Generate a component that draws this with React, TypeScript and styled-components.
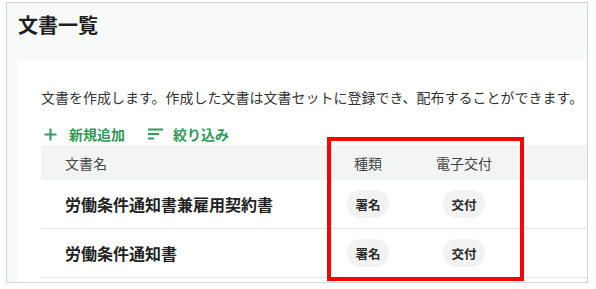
import styled, { createGlobalStyle } from "styled-components";

const GlobalStyle = createGlobalStyle`
  html, body {
    margin: 0;
    padding: 0;
    background: #ffffff;
  }
  body {
    font-family: "Noto Sans CJK JP", "Noto Sans", sans-serif;
    color: #222222;
  }
`;

const Page = styled.div`
  position: relative;
  width: 596px;
  height: 289px;
  padding: 2px 0 0 6px;
  box-sizing: border-box;
`;

const Frame = styled.div`
  width: 582px;
  height: 281px;
  box-sizing: border-box;
  border: 1px solid #d4d4d4;
  background: #f8f9f9;
  overflow: hidden;
  display: flex;
  flex-direction: column;
`;

const PageHeader = styled.div`
  height: 57px;
  padding: 9px 0 0 11px;
  box-sizing: border-box;
  flex-shrink: 0;
`;

const Title = styled.h1`
  margin: 0;
  font-size: 20px;
  line-height: 26px;
  font-weight: 700;
  color: #1f1f1f;
`;

const Card = styled.div`
  flex: 1;
  margin-left: 10px;
  background: #ffffff;
  padding: 27px 0 0 24px;
  display: flex;
  flex-direction: column;
`;

const Description = styled.p`
  margin: 0;
  font-size: 14px;
  line-height: 20px;
  color: #333333;
  white-space: nowrap;
`;

const Toolbar = styled.div`
  display: flex;
  align-items: center;
  gap: 20px;
  margin-top: 17px;
  height: 20px;
`;

const ToolButton = styled.button<{ $gap: number }>`
  display: flex;
  align-items: center;
  gap: ${(p) => p.$gap}px;
  padding: 0 0 0 3px;
  border: none;
  background: none;
  font-family: inherit;
  font-size: 14px;
  font-weight: 700;
  line-height: 20px;
  color: #2e9b57;
  cursor: pointer;
`;

const Table = styled.div`
  margin-top: 1px;
  display: flex;
  flex-direction: column;
`;

const Row = styled.div<{ $head?: boolean }>`
  display: grid;
  grid-template-columns: 289px 76px 116px 1fr;
  align-items: center;
  height: ${(p) => (p.$head ? "35px" : "49px")};
  box-sizing: border-box;
  background: ${(p) => (p.$head ? "#f3f4f4" : "#ffffff")};
  border-bottom: ${(p) => (p.$head ? "none" : "1px solid #e6e6e6")};
`;

const HeadCell = styled.div<{ $center?: boolean }>`
  font-size: 14px;
  color: #444444;
  padding-left: ${(p) => (p.$center ? "0" : "24px")};
  text-align: ${(p) => (p.$center ? "center" : "left")};
`;

const NameCell = styled.div`
  padding-left: 24px;
  font-size: 16px;
  font-weight: 700;
  color: #222222;
  white-space: nowrap;
`;

const BadgeCell = styled.div`
  display: flex;
  justify-content: center;
`;

const Badge = styled.span`
  display: inline-flex;
  align-items: center;
  justify-content: center;
  height: 28px;
  padding: 0 8px;
  border-radius: 14px;
  background: #f2f2f2;
  font-size: 12.5px;
  font-weight: 700;
  color: #2a2a2a;
`;

const Highlight = styled.div`
  position: absolute;
  left: 327px;
  top: 137px;
  width: 197px;
  height: 144px;
  box-sizing: border-box;
  border: 4px solid #ff0000;
  pointer-events: none;
`;

const PlusIcon = () => (
  <svg width="13" height="13" viewBox="0 0 13 13">
    <path d="M6.5 0.5v12M0.5 6.5h12" stroke="#2e9b57" strokeWidth="2" fill="none" />
  </svg>
);

const FilterIcon = () => (
  <svg width="16" height="14" viewBox="0 0 16 14">
    <path
      d="M0 2.5h15M0 7h11M0 11.5h6"
      stroke="#2e9b57"
      strokeWidth="2"
      fill="none"
    />
  </svg>
);

const documents = [
  { name: "労働条件通知書兼雇用契約書", kind: "署名", delivery: "交付" },
  { name: "労働条件通知書", kind: "署名", delivery: "交付" },
];

export default function App() {
  return (
    <Page>
      <GlobalStyle />
      <Frame>
        <PageHeader>
          <Title>文書一覧</Title>
        </PageHeader>
        <Card>
          <Description>
            文書を作成します。作成した文書は文書セットに登録でき、配布することができます。
          </Description>
          <Toolbar>
            <ToolButton $gap={12}>
              <PlusIcon />
              新規追加
            </ToolButton>
            <ToolButton $gap={9}>
              <FilterIcon />
              絞り込み
            </ToolButton>
          </Toolbar>
          <Table>
            <Row $head>
              <HeadCell>文書名</HeadCell>
              <HeadCell $center>種類</HeadCell>
              <HeadCell $center>電子交付</HeadCell>
              <div />
            </Row>
            {documents.map((doc) => (
              <Row key={doc.name}>
                <NameCell>{doc.name}</NameCell>
                <BadgeCell>
                  <Badge>{doc.kind}</Badge>
                </BadgeCell>
                <BadgeCell>
                  <Badge>{doc.delivery}</Badge>
                </BadgeCell>
                <div />
              </Row>
            ))}
          </Table>
        </Card>
      </Frame>
      <Highlight />
    </Page>
  );
}
